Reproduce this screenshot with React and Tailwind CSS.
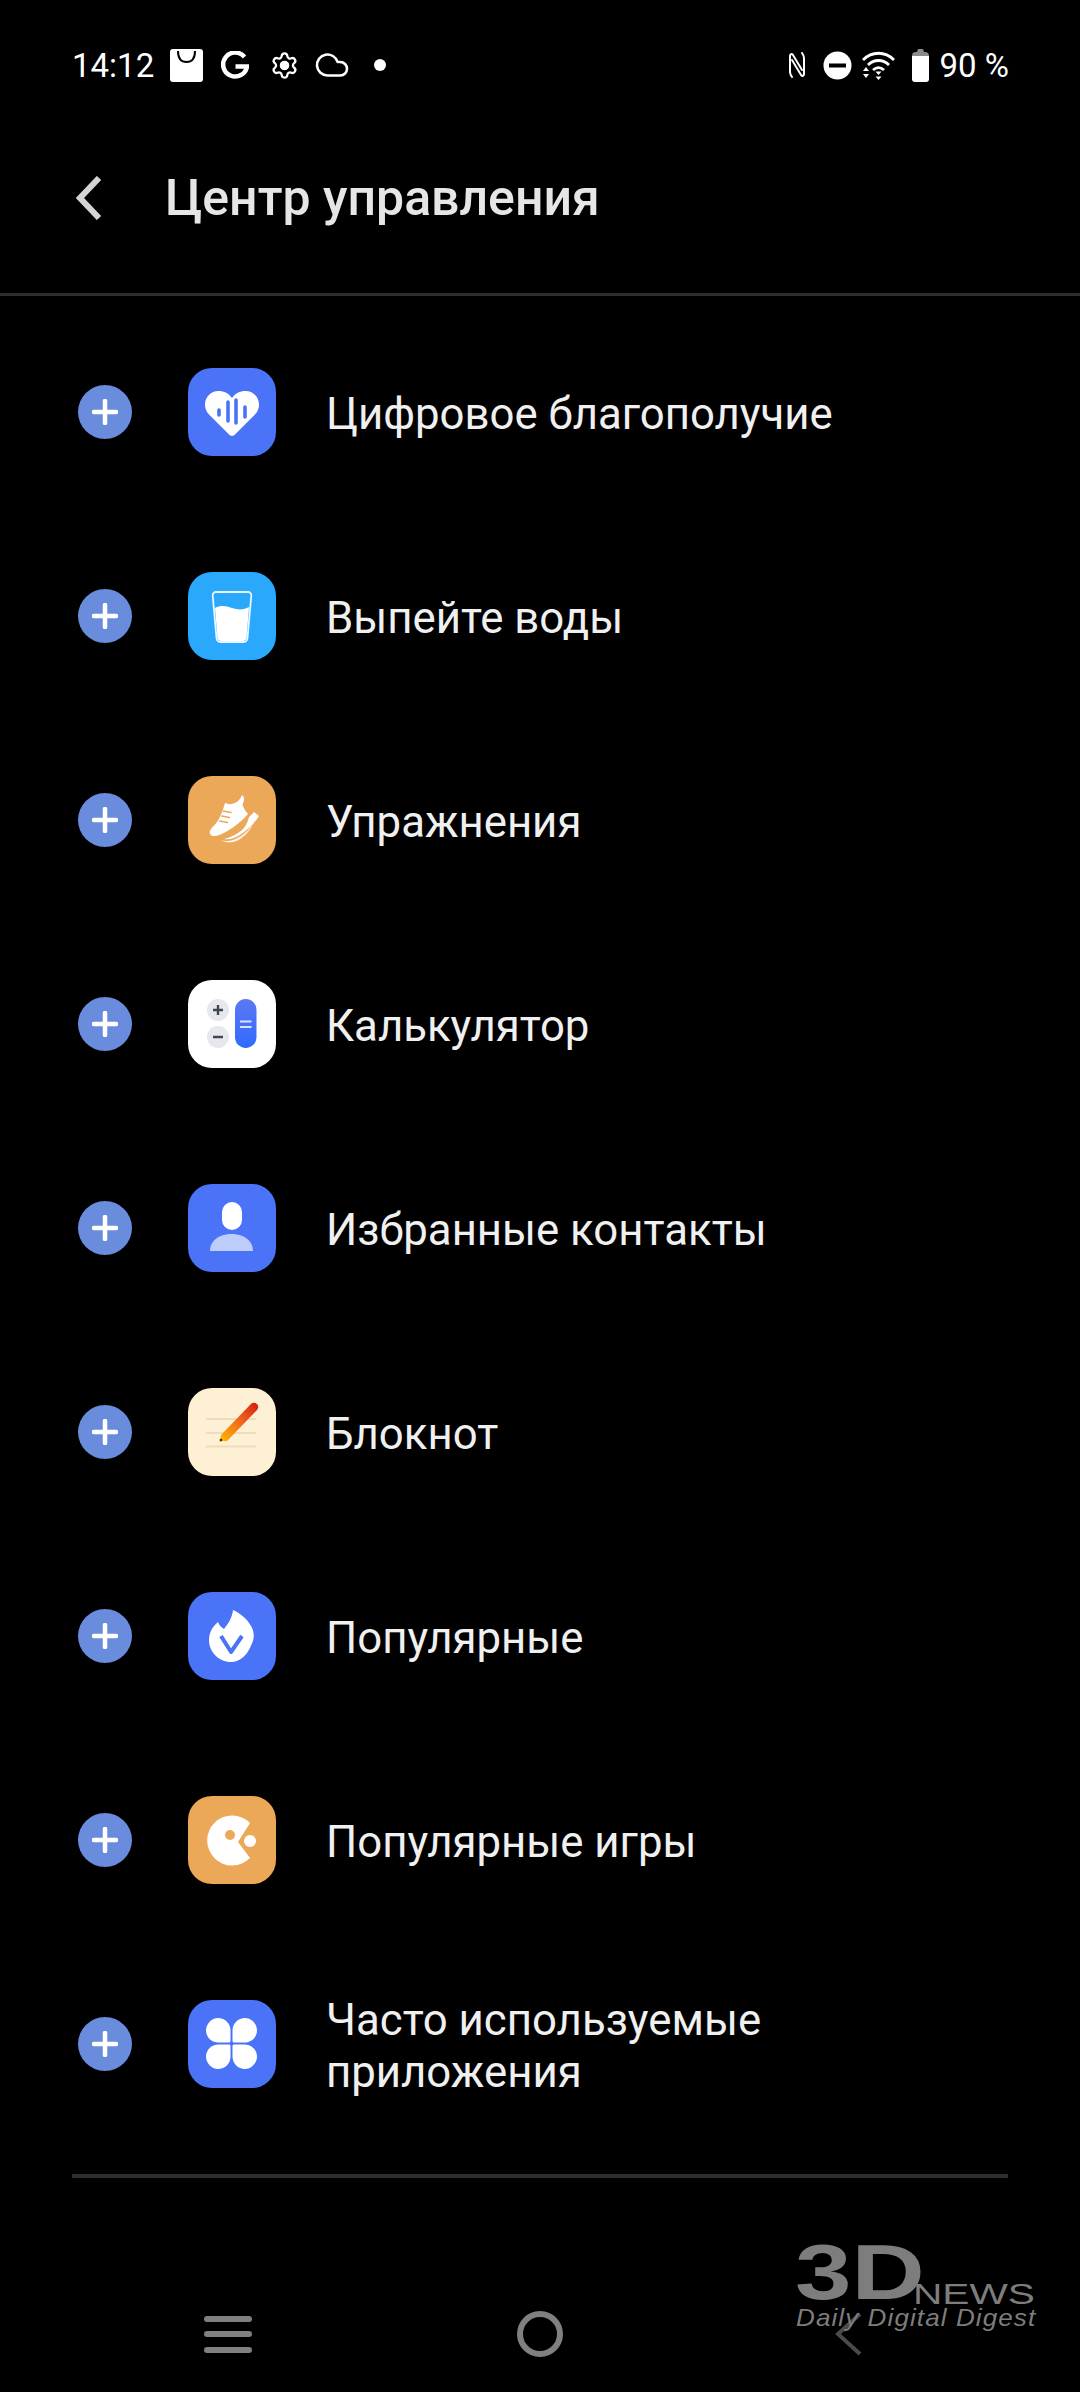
import { Settings, Cloud } from "lucide-react";

const font = { fontFamily: "Roboto, sans-serif" };
const logoFont = { fontFamily: "Liberation Sans, sans-serif" };

/* иконки приложений, viewBox 88x88 */
const HeartIcon = () => (
  <svg viewBox="0 0 88 88" className="w-full h-full">
    <path d="M44 68c-1 0-2-.5-3-1.400L21.500 47C18 43.500 17 40 17 36.500 17 29 23 23 30.500 23c5.500 0 10.500 2.500 13.500 7 3-4.500 8-7 13.500-7C65 23 71 29 71 36.500c0 3.500-1 7-4.500 10.500L47 66.600c-1 .9-2 1.400-3 1.400z" fill="#fff" />
    <g stroke="#4a73f7" strokeWidth="3.600" strokeLinecap="round">
      <path d="M31 42v5M40 34v19M48 32v23M57 39v10" />
    </g>
  </svg>
);

const GlassIcon = () => (
  <svg viewBox="0 0 88 88" className="w-full h-full">
    <path d="M27 36c6-3 11-2 17 0s12 2 17-1l-2.500 31c-.2 2-1.500 3-3.500 3H33c-2 0-3.300-1-3.500-3z" fill="#fff" />
    <path d="M28 20h32c2 0 3.500 1.500 3.300 3.500L59.500 66c-.2 2.500-2 4-4 4H32.500c-2 0-3.800-1.500-4-4L24.700 23.500C24.500 21.500 26 20 28 20z" fill="none" stroke="#fff" strokeWidth="1.800" opacity="0.9" />
  </svg>
);

const ShoeIcon = () => (
  <svg viewBox="0 0 88 88" className="w-full h-full">
    <path d="M37 27c3 1.500 7 1.500 10 0 3-1.500 5.500-4 7-8 1.500 1 2.500 3 2 5-.4 1.800-1 3.500-1.500 5 1.500 3.500 3 6.500 5.500 9-6 7-13 12.500-19 16-4.500 2.500-9 5.500-14 6-4 .4-6-2-5-5 1-3 4.500-5.500 7-9 3.500-5 6-12 8-19z" fill="#fff" />
    <path d="M61 41l5-5 5 4c-5 8-12 15-20 19.500-5 3-10 4.500-15 3.500 7-1.500 13-5 18-9 3-2.500 5.500-7 7-13z" fill="#fff" />
    <path d="M33 64.500c7 1.500 14-.5 20-4.500 5-3.500 9-7.500 12-12-2.500 6-7.500 11.500-13.500 15.500-6 3.500-12 4-18.500 1z" fill="#fff" opacity="0.85" />
    <g stroke="#eba858" strokeWidth="1.400" strokeLinecap="round">
      <path d="M35 35l8 1.500M33.500 40l8 1.500M31.500 45l8 1.500" />
    </g>
  </svg>
);

const CalcIcon = () => (
  <svg viewBox="0 0 88 88" className="w-full h-full">
    <defs>
      <linearGradient id="calcGrad" x1="0" y1="0" x2="0" y2="1">
        <stop offset="0" stopColor="#5d78f2" />
        <stop offset="1" stopColor="#2f6bff" />
      </linearGradient>
    </defs>
    <circle cx="30" cy="30" r="11" fill="#e6e8ee" />
    <circle cx="30" cy="57" r="11" fill="#e6e8ee" />
    <path d="M25 30h10M30 25v10M25 57h10" stroke="#41454f" strokeWidth="2.400" />
    <rect x="47" y="19" width="21.500" height="49" rx="10.700" fill="url(#calcGrad)" />
    <path d="M52 41.500h11.500M52 47h11.500" stroke="#dbe4ff" strokeWidth="2.200" />
  </svg>
);

const ContactIcon = () => (
  <svg viewBox="0 0 88 88" className="w-full h-full">
    <rect x="34" y="18" width="20" height="28" rx="10" fill="#fff" />
    <path d="M22 67c0-11 10-17 21.500-17S65 56 65 67z" fill="#bccdfb" />
  </svg>
);

const NoteIcon = () => (
  <svg viewBox="0 0 88 88" className="w-full h-full">
    <defs>
      <linearGradient id="pencilGrad" gradientUnits="userSpaceOnUse" x1="33" y1="52" x2="69" y2="16">
        <stop offset="0" stopColor="#ffb300" />
        <stop offset="0.55" stopColor="#f0641e" />
        <stop offset="1" stopColor="#d81f0f" />
      </linearGradient>
    </defs>
    <path d="M18 31h50M18 45h50M18 58.500h50" stroke="#eedcbc" strokeWidth="2" />
    <path d="M37 49l29-30" stroke="url(#pencilGrad)" strokeWidth="8.500" strokeLinecap="round" />
    <path d="M31.500 54l1.500-6 4 4z" fill="#ffb300" />
    <circle cx="33" cy="52" r="1.300" fill="#3a2a10" />
  </svg>
);

const FireIcon = () => (
  <svg viewBox="0 0 88 88" className="w-full h-full">
    <path d="M45 18c7 3 16 10 19.500 19 2 5 1.500 11-1 15.500C59.500 63 52 70 43 70c-12 0-22-10-22-22 0-7 3-13 9-18 1 3 3 5 6 7 4-5 8-11 9-19z" fill="#fff" />
    <path d="M33 44l10 16 11-16" fill="none" stroke="#4a73f7" strokeWidth="4" strokeLinejoin="round" />
  </svg>
);

const GameIcon = () => (
  <svg viewBox="0 0 88 88" className="w-full h-full">
    <path d="M62 27A25 25 0 1 0 62 62L50 46z" fill="#fff" />
    <circle cx="42" cy="39" r="5" fill="#eba858" />
    <circle cx="62" cy="45" r="6" fill="#fff" />
  </svg>
);

const AppsIcon = () => (
  <svg viewBox="0 0 88 88" className="w-full h-full">
    <g fill="#fff">
      <path d="M30 18c7 0 12.500 5.500 12.500 12.500V41c0 .8-.7 1.500-1.500 1.500H30.500C23.500 42.500 18 37 18 30.500S23.500 18 30 18z" />
      <path d="M57 18c-7 0-12.500 5.500-12.500 12.500V41c0 .8.700 1.500 1.500 1.500h10.500C63.500 42.500 69 37 69 30.500S63.500 18 57 18z" />
      <path d="M30 69c7 0 12.500-5.500 12.500-12.500V46c0-.8-.7-1.500-1.500-1.500H30.500C23.500 44.500 18 50 18 56.500S23.500 69 30 69z" />
      <path d="M57 69c-7 0-12.500-5.500-12.500-12.500V46c0-.8.700-1.500 1.500-1.500h10.500C63.500 44.500 69 50 69 56.500S63.500 69 57 69z" />
    </g>
  </svg>
);

const ITEMS = [
  { label: "Цифровое благополучие", bg: "bg-[#4a73f7]", Icon: HeartIcon },
  { label: "Выпейте воды", bg: "bg-[#2aa9fc]", Icon: GlassIcon },
  { label: "Упражнения", bg: "bg-[#eba858]", Icon: ShoeIcon },
  { label: "Калькулятор", bg: "bg-white", Icon: CalcIcon },
  { label: "Избранные контакты", bg: "bg-[#4a73f7]", Icon: ContactIcon },
  { label: "Блокнот", bg: "bg-[#fdf0d5]", Icon: NoteIcon },
  { label: "Популярные", bg: "bg-[#4a73f7]", Icon: FireIcon },
  { label: "Популярные игры", bg: "bg-[#eba858]", Icon: GameIcon },
  { label: "Часто используемые приложения", bg: "bg-[#4a73f7]", Icon: AppsIcon },
];

function StatusBar() {
  return (
    <div className="h-[130px] flex items-center justify-between pl-[72px] pr-[71px] text-white">
      <div className="flex items-center">
        <span className="text-[33px] leading-[40px] w-[98px] mt-[1px]">14:12</span>
        {/* магазин */}
        <svg viewBox="0 0 33 33" className="w-[33px] h-[33px]">
          <path d="M3 0h27a3 3 0 0 1 3 3v27a3 3 0 0 1-3 3H3a3 3 0 0 1-3-3V3a3 3 0 0 1 3-3z" fill="#fff" />
          <path d="M8 2c0 7 3 11 8.500 11S25 9 25 2" fill="none" stroke="#000" strokeWidth="2" />
        </svg>
        <svg viewBox="0 0 28 28" className="w-[28px] h-[28px] ml-[18px]">
          <path d="M23.500 6A12 12 0 1 0 26 15.500H14.500" fill="none" stroke="#fff" strokeWidth="4.500" />
        </svg>
        <div className="relative w-[29px] h-[29px] ml-[21px]">
          <Settings size={29} strokeWidth={1.900} />
          <div className="absolute left-[10px] top-[10px] w-[9px] h-[9px] rounded-full bg-white" />
        </div>
        <Cloud size={36} strokeWidth={1.700} className="ml-[15px]" />
        <div className="w-[12px] h-[12px] rounded-full bg-white ml-[24px]" />
      </div>
      <div className="flex items-center">
        <svg viewBox="0 0 18 26" className="w-[18px] h-[26px]">
          <path d="M2 20V4c0-2 1.500-2.500 3-1l9 15M16 6v16c0 2-1.500 2.500-3 1L4 8M2 20c0 2 .5 3 2 5M16 6c0-2-.5-3-2-5" fill="none" stroke="#fff" strokeWidth="2" strokeLinecap="round" />
        </svg>
        <svg viewBox="0 0 29 29" className="w-[29px] h-[29px] ml-[17px]">
          <circle cx="14.500" cy="14.500" r="14" fill="#fff" />
          <rect x="6" y="12.500" width="17" height="4" fill="#000" />
        </svg>
        <svg viewBox="0 0 33 29" className="w-[33px] h-[29px] ml-[10px]">
          <g fill="none" stroke="#fff" strokeWidth="2.800">
            <path d="M1 9c9-9 22-9 31 0" />
            <path d="M6 14c6-6 15-6 21 0" />
            <path d="M11 19c3.500-3 7.500-3 11 0" />
          </g>
          <path d="M16.500 24l-3 -3.500h6zM4 16l3 4H1zM4 27l-3-4h6zM16.500 29l-3-3.500h6z" fill="#fff" />
        </svg>
        <svg viewBox="0 0 17 33" className="w-[17px] h-[33px] ml-[17px]">
          <path d="M5 3l1-3h5l1 3h1a4 4 0 0 1 4 4v2H0V7a4 4 0 0 1 4-4z" fill="#8a8a8a" />
          <path d="M0 7h17v23a3 3 0 0 1-3 3H3a3 3 0 0 1-3-3z" fill="#fff" />
        </svg>
        <span className="text-[33px] leading-[40px] ml-[11px] mt-[1px]">90 %</span>
      </div>
    </div>
  );
}

function Watermark() {
  return (
    <div className="absolute left-[795px] top-[2245px] w-[246px] h-[86px] text-[#7d7d7d]" style={logoFont}>
      <div className="absolute left-[0px] top-[-12px] text-[78px] leading-[78px] font-bold origin-left scale-x-[1.300] whitespace-nowrap">3D</div>
      <div className="absolute left-[118px] top-[34px] text-[29px] leading-[30px] origin-left scale-x-[1.400] whitespace-nowrap">NEWS</div>
      <div className="absolute left-[1px] top-[59px] text-[24px] leading-[28px] italic whitespace-nowrap tracking-[1px] origin-left scale-x-[1.085]">Daily Digital Digest</div>
    </div>
  );
}

export default function App() {
  return (
    <div className="relative w-[1080px] h-[2392px] bg-black overflow-hidden" style={font}>
      <StatusBar />

      <div className="h-[166px] pb-[27px] flex items-center border-b-[3px] border-[#2e2e2e]">
        <svg viewBox="0 0 26 44" className="w-[26px] h-[44px] ml-[76px]">
          <path d="M23 2L4 22l19 20" fill="none" stroke="#d4d4d4" strokeWidth="6" />
        </svg>
        <h1 className="ml-[63px] text-[50px] leading-[56px] font-medium text-[#e6e6e6]">Центр управления</h1>
      </div>

      <div className="pt-[14px]">
        {ITEMS.map(({ label, bg, Icon }) => (
          <div key={label} className="h-[204px] flex items-center">
            <div className="ml-[78px] w-[54px] h-[54px] rounded-full bg-[#6a8cdc] flex items-center justify-center">
              <svg viewBox="0 0 26 26" className="w-[26px] h-[26px]">
                <path d="M13 2v22M2 13h22" stroke="#fff" strokeWidth="4.500" strokeLinecap="round" />
              </svg>
            </div>
            <div className={`ml-[56px] w-[88px] h-[88px] rounded-[24px] shrink-0 ${bg}`}>
              <Icon />
            </div>
            <div className="ml-[50px] mt-[3px] w-[600px] text-[43.750px] leading-[52px] text-[#f0f0f0]">{label}</div>
          </div>
        ))}
      </div>

      <div className="mt-[28px] mx-[72px] h-[4px] bg-[#2e2e2e]" />

      {/* навигация */}
      <div className="mt-[133px] h-[46px] flex items-center">
        <div className="ml-[204px] w-[48px] flex flex-col gap-[9.500px]">
          <div className="h-[6px] rounded-full bg-[#808080]" />
          <div className="h-[6px] rounded-full bg-[#808080]" />
          <div className="h-[6px] rounded-full bg-[#808080]" />
        </div>
        <div className="ml-[265px] w-[46px] h-[46px] rounded-full border-[6px] border-[#808080]" />
        <svg viewBox="0 0 28 44" className="ml-[272px] w-[28px] h-[44px] shrink-0">
          <path d="M25 2L3 22l22 20" fill="none" stroke="#4a4a4a" strokeWidth="4" />
        </svg>
      </div>
      <Watermark />
    </div>
  );
}
